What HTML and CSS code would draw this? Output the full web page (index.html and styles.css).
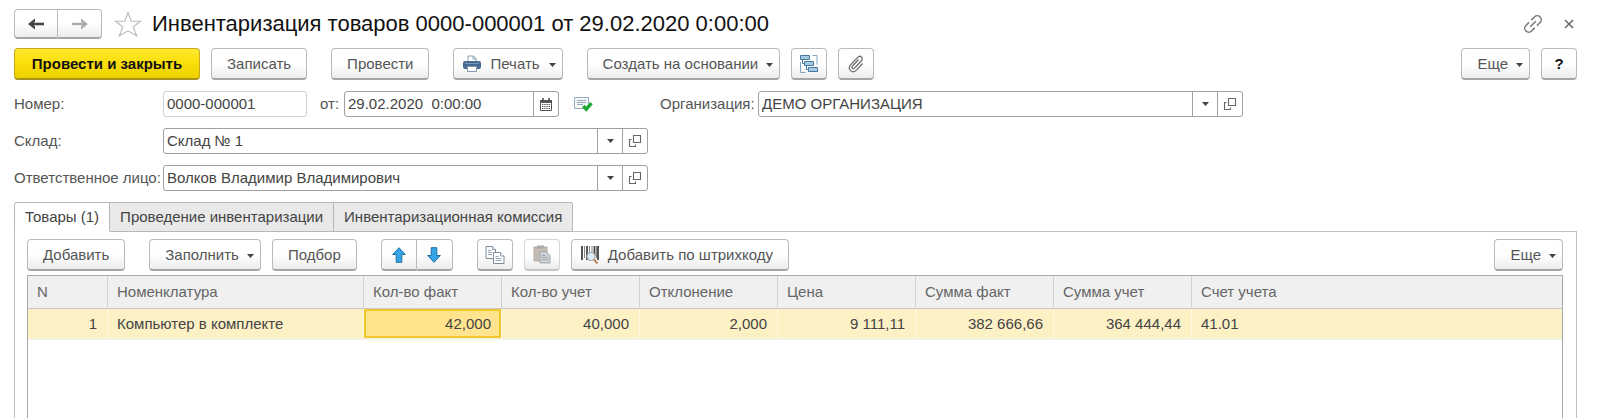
FILE: index.html
```html
<!DOCTYPE html>
<html lang="ru">
<head>
<meta charset="utf-8">
<title>Инвентаризация товаров</title>
<link rel="stylesheet" href="styles.css">
</head>
<body>
<svg class="sprite" width="0" height="0" aria-hidden="true">
  <symbol id="open" viewBox="0 0 14 14"><path d="M5.5 1.5h7v7h-7zM3.5 5.5h-2v7h6v-2" fill="none" stroke="#666" stroke-width="1.1"/></symbol>
  <symbol id="caret" viewBox="0 0 7 4"><path d="M0 0h7L3.5 4z" fill="#444"/></symbol>
</svg>
<main class="page">
  <header class="title-bar">
    <div class="btn-group nav">
      <button class="btn" aria-label="Назад"><svg width="18" height="14" viewBox="0 0 18 14"><path d="M4 7H17" stroke="#444" stroke-width="2.600"/><path d="M8 1.500V4.500L5.500 7L8 9.500V12.500L1 7Z" fill="#444"/></svg></button>
      <button class="btn" aria-label="Вперед"><svg width="18" height="14" viewBox="0 0 18 14"><path d="M14 7H1" stroke="#aaa" stroke-width="2.400"/><path d="M10 1.500V4.500L12.500 7L10 9.500V12.500L17 7Z" fill="#aaa"/></svg></button>
    </div>
    <button class="plain" aria-label="В избранное"><svg width="28" height="27" viewBox="0 0 28 27"><path d="M14 1.500L17.200 10.300H26.500L19.200 16L22.800 25L14 19.800L5.200 25L8.800 16L1.500 10.300H10.800Z" fill="#fff" stroke="#b5bac0" stroke-width="1.100"/></svg></button>
    <h1 class="title">Инвентаризация товаров 0000-000001 от 29.02.2020 0:00:00</h1>
    <div class="window-tools">
      <button class="plain" aria-label="Ссылка"><svg width="20" height="20" viewBox="0 0 20 20"><g transform="rotate(-45 10 10)" fill="none" stroke="#777" stroke-width="1.500"><path d="M8.500 6H4a4 4 0 0 0 0 8h4.500M11.500 6H16a4 4 0 0 1 0 8h-4.500M6 10h8"/></g></svg></button>
      <button class="plain" aria-label="Закрыть"><svg width="10" height="10" viewBox="0 0 10 10"><path d="M1 1l8 8M9 1L1 9" stroke="#666" stroke-width="1.500"/></svg></button>
    </div>
  </header>

  <div class="toolbar">
    <button class="btn primary">Провести и закрыть</button>
    <button class="btn">Записать</button>
    <button class="btn spaced">Провести</button>
    <button class="btn with-icon spaced">
      <svg width="18" height="18" viewBox="0 0 18 18"><path d="M5 7V1h5.500L13 3.500V7" fill="#fff" stroke="#8aa0b5"/><path d="M10 1v3h3" fill="none" stroke="#8aa0b5"/><rect y="6" width="18" height="8" rx="2" fill="#476c93"/><path d="M2 8.500h14" stroke="#7895b3"/><path d="M4.500 11.500h9v5h-9z" fill="#fff" stroke="#8298ae"/></svg>
      Печать<svg class="caret" width="7" height="4"><use href="#caret"/></svg></button>
    <button class="btn with-caret spaced">Создать на основании<svg class="caret" width="7" height="4"><use href="#caret"/></svg></button>
    <button class="btn square" aria-label="Структура подчиненности"><svg width="18" height="18" viewBox="0 0 18 18"><path d="M2.500 4.500V8.500H5M6.500 10.500V14.500H9" fill="none" stroke="#47799f"/><path d="M12.500 .500h4.500v9M.500 7v10.500h5" fill="none" stroke="#7fa5c2"/><path d="M.500 .500h9v4h-9zM4.500 6.500h9v4h-9zM8.500 12.500h9v4h-9z" fill="#a3c8e2" stroke="#47799f"/></svg></button>
    <button class="btn square" aria-label="Файлы"><svg width="16" height="18" viewBox="0 0 16 18"><path d="M10.500 4.500L4.700 10.700C2.900 12.700 5 14.600 6.800 12.800L13.200 6C16.100 2.700 12.300 -.5 9.400 2.600L3 9.400C-1.300 14.200 4.300 19.300 8.700 14.900L14.500 8.500" fill="none" stroke="#707070" stroke-width="1.300"/></svg></button>
    <button class="btn with-caret end">Еще<svg class="caret" width="7" height="4"><use href="#caret"/></svg></button>
    <button class="btn square help">?</button>
  </div>

  <form class="fields">
    <div class="row">
      <label class="label" for="number">Номер:</label>
      <div class="field readonly number"><input id="number" value="0000-000001" readonly></div>
      <label class="label-date" for="date">от:</label>
      <div class="field date"><input id="date" value="29.02.2020  0:00:00"><button type="button" aria-label="Календарь"><svg width="12" height="13" viewBox="0 0 12 13"><path d="M.500 2.500h11v10h-11z" fill="#fff" stroke="#555"/><path d="M0 2h12v3H0z" fill="#555"/><path d="M3 0v3M9 0v3" stroke="#444" stroke-width="1.500"/><path d="M2 6.500h8M2 8.500h8M2 10.500h8" stroke="#555" stroke-width="1.200" stroke-dasharray="1.400 .8"/></svg></button></div>
      <svg class="status" width="19" height="16" viewBox="0 0 19 16"><path d="M.500 1.500h14v11h-14z" fill="#f5f8fb" stroke="#9baabd"/><path d="M3 4.500h9M3 6.500h9M3 8.500h6" stroke="#9baabd"/><path d="M9.300 10l3 3.200 5.200-6" fill="none" stroke="#1fa932" stroke-width="3.400"/></svg>
      <label class="label-org" for="org">Организация:</label>
      <div class="field wide"><input id="org" value="ДЕМО ОРГАНИЗАЦИЯ"><button type="button" aria-label="Выбрать"><svg width="7" height="4"><use href="#caret"/></svg></button><button type="button" aria-label="Открыть"><svg width="14" height="14"><use href="#open"/></svg></button></div>
    </div>
    <div class="row">
      <label class="label" for="store">Склад:</label>
      <div class="field wide"><input id="store" value="Склад № 1"><button type="button" aria-label="Выбрать"><svg width="7" height="4"><use href="#caret"/></svg></button><button type="button" aria-label="Открыть"><svg width="14" height="14"><use href="#open"/></svg></button></div>
    </div>
    <div class="row">
      <label class="label" for="person">Ответственное лицо:</label>
      <div class="field wide"><input id="person" value="Волков Владимир Владимирович"><button type="button" aria-label="Выбрать"><svg width="7" height="4"><use href="#caret"/></svg></button><button type="button" aria-label="Открыть"><svg width="14" height="14"><use href="#open"/></svg></button></div>
    </div>
  </form>

  <div class="tabs" role="tablist">
    <button class="tab active" role="tab" aria-selected="true">Товары (1)</button>
    <button class="tab" role="tab">Проведение инвентаризации</button>
    <button class="tab" role="tab">Инвентаризационная комиссия</button>
  </div>
  <section class="panel">
    <div class="toolbar">
      <button class="btn">Добавить</button>
      <button class="btn with-caret spaced">Заполнить<svg class="caret" width="7" height="4"><use href="#caret"/></svg></button>
      <button class="btn">Подбор</button>
      <div class="btn-group spaced">
        <button class="btn square" aria-label="Вверх"><svg width="14" height="16" viewBox="0 0 14 16"><path d="M7 .700L13.300 7.500H9.800V15.300H4.200V7.500H.700Z" fill="#37a5e5" stroke="#1b6fa6"/></svg></button>
        <button class="btn square" aria-label="Вниз"><svg width="14" height="16" viewBox="0 0 14 16"><path d="M7 15.300L13.300 8.500H9.800V.700H4.200V8.500H.700Z" fill="#37a5e5" stroke="#1b6fa6"/></svg></button>
      </div>
      <button class="btn square spaced" aria-label="Копировать"><svg width="20" height="18" viewBox="0 0 20 18"><g fill="#fff" stroke="#7d8da0"><path d="M1 .500h6.500l3 3V12.500H1z"/><path d="M7.500 .500v3h3M3 4.500h3M3 6.500h4M3 8.500h4" stroke-width=".8"/><path d="M8.500 6.500h7l3.500 3.500v7.500H8.500z"/><path d="M15.500 6.500v3.500H19M10.500 10.500h3M10.500 12.500h6M10.500 14.500h6" stroke-width=".8"/></g></svg></button>
      <button class="btn square" aria-label="Вставить" disabled><svg width="18" height="19" viewBox="0 0 18 19"><path d="M1 2h13v14H1z" fill="#c5bdb5" stroke="#b1aaa4"/><path d="M4 .500h7v3H4z" fill="#aaa"/><path d="M7 6.500h6l4 4v7.500H7z" fill="#ccd0d4" stroke="#a5a9ad"/><path d="M9 10.500h3M9 12.500h6M9 14.500h6" stroke="#a5a9ad"/></svg></button>
      <button class="btn with-icon barcode"><svg width="18" height="18" viewBox="0 0 18 18"><path d="M1 0v14M6 0v14M13.500 0v10M17 0v14" stroke="#444" stroke-width="1.800"/><path d="M3.500 0v12M8.500 0v12M11 0v12M15.500 0v12" stroke="#777" stroke-width=".9"/><circle cx="10" cy="10.500" r="4" fill="#dcecf8" stroke="#a9a5a5" stroke-width="1.200"/><path d="M13 13.500l3.500 4" stroke="#bd8356" stroke-width="2"/></svg>Добавить по штрихкоду</button>
      <button class="btn with-caret end">Еще<svg class="caret" width="7" height="4"><use href="#caret"/></svg></button>
    </div>
    <div class="grid">
      <table>
        <colgroup><col class="c-n"><col class="c-name"><col class="c-num"><col class="c-num"><col class="c-num"><col class="c-num"><col class="c-num"><col class="c-num"><col></colgroup>
        <thead><tr><th>N</th><th>Номенклатура</th><th>Кол-во факт</th><th>Кол-во учет</th><th>Отклонение</th><th>Цена</th><th>Сумма факт</th><th>Сумма учет</th><th>Счет учета</th></tr></thead>
        <tbody><tr><td class="num">1</td><td>Компьютер в комплекте</td><td class="num selected">42,000</td><td class="num">40,000</td><td class="num">2,000</td><td class="num">9 111,11</td><td class="num">382 666,66</td><td class="num">364 444,44</td><td>41.01</td></tr></tbody>
      </table>
    </div>
  </section>
</main>
</body>
</html>
```

FILE: styles.css
```css
* { box-sizing: border-box; }
body {
  margin: 0;
  background: #fff;
  color: #444;
  font: 15px/20px "Liberation Sans", Arial, sans-serif;
}
button, input { font: inherit; color: inherit; }
svg { flex: none; display: block; }
.sprite { position: absolute; }

.page {
  display: flex;
  flex-direction: column;
  min-height: 100vh;
  padding: 9px 23px 0 14px;
}

.title-bar { display: flex; align-items: center; height: 30px; }
.title {
  flex: 1;
  margin: 0 0 0 10px;
  color: #111;
  font-size: 22px;
  line-height: 28px;
  font-weight: 400;
  white-space: nowrap;
}
.plain { display: flex; padding: 0; border: 0; background: none; }
.nav { margin-right: 12px; }
.window-tools { display: flex; align-items: center; gap: 21px; margin-right: 3px; }

.btn {
  display: flex;
  align-items: center;
  justify-content: center;
  height: 32px;
  padding: 0 15px;
  border: 1px solid #bbb;
  border-bottom: 2px solid #a5a5a5;
  border-radius: 4px;
  background: linear-gradient(#fff 50%, #ececec);
  color: #555;
  white-space: nowrap;
}
.btn.primary {
  min-width: 186px;
  border-color: #c4aa1c;
  border-bottom-color: #a8921c;
  background: linear-gradient(#ffe92e, #fade0a 50%, #edd000);
  color: #111;
  font-weight: 700;
}
.btn.square { width: 36px; padding: 0; }
.btn.with-caret { padding-right: 6px; }
.btn.with-icon { gap: 9px; padding: 0 6px 0 9px; }
.btn.barcode { padding-right: 15px; }
.btn.help { color: #111; font-weight: 700; }
.btn:disabled { border-color: #d5d5d5; border-bottom-color: #c5c5c5; }
.caret { margin: 3px 0 0 8px; }
.with-icon .caret { margin-left: 0; }

.btn-group { display: flex; }
.btn-group .btn:first-child { border-radius: 4px 0 0 4px; }
.btn-group .btn:last-child { border-left: 0; border-radius: 0 4px 4px 0; }
.nav .btn { width: 44px; height: 30px; padding: 0; }

.toolbar { display: flex; gap: 11px; }
.page > .toolbar { margin-top: 9px; }
.toolbar .spaced { margin-left: 13px; }
.toolbar .end { margin-left: auto; }

.fields { display: flex; flex-direction: column; gap: 11px; margin-top: 11px; }
.row { display: flex; align-items: center; }
.label { width: 149px; color: #555; white-space: nowrap; }
.label-date { width: 24px; margin-left: 13px; color: #555; }
.label-org { width: 98px; margin-left: 67px; color: #555; white-space: nowrap; }
.status { margin-left: 15px; }
.field {
  display: flex;
  height: 26px;
  border: 1px solid #a0a0a0;
  border-radius: 3px;
  background: #fff;
}
.field.readonly { border-color: #d0d0d0; }
.field.number { width: 144px; }
.field.date { width: 215px; }
.field.wide { width: 485px; }
.field input {
  flex: 1;
  min-width: 0;
  padding: 0 3px;
  border: 0;
  background: none;
  outline: 0;
}
.field button {
  display: flex;
  align-items: center;
  justify-content: center;
  width: 25px;
  padding: 0;
  border: 0;
  border-left: 1px solid #a0a0a0;
  background: none;
}

.tabs { display: flex; position: relative; z-index: 1; margin-top: 11px; }
.tab {
  height: 30px;
  padding: 0 10px;
  border: 1px solid #b8b8b8;
  border-left: 0;
  background: #e9e9e9;
  white-space: nowrap;
}
.tab.active {
  border-left: 1px solid #b8b8b8;
  border-bottom-color: #fff;
  border-radius: 3px 0 0 0;
  background: #fff;
}
.tab:last-child { border-radius: 0 3px 0 0; }
.panel {
  flex: 1;
  display: flex;
  flex-direction: column;
  margin-top: -1px;
  padding: 7px 13px 0 12px;
  border: 1px solid #c0c0c0;
  border-bottom: 0;
}
.grid {
  flex: 1;
  margin-top: 4px;
  border: 1px solid #aaa;
  border-bottom: 0;
}
table { width: 100%; table-layout: fixed; border-collapse: separate; border-spacing: 0; }
.c-n { width: 80px; }
.c-name { width: 256px; }
.c-num { width: 138px; }
th, td { height: 33px; padding: 0 10px 0 9px; text-align: left; font-weight: 400; white-space: nowrap; }
th { border-right: 1px solid #d2d2d2; border-bottom: 1px solid #c8c8c8; background: #f0f0f0; color: #666; }
td { height: 31px; border-right: 1px solid #fff8e2; border-bottom: 2px solid #f3f1e6; background: #fcf0c5; }
th:last-child, td:last-child { border-right: 0; }
td.num { text-align: right; }
td.selected { background: #ffe48d; box-shadow: inset 0 0 0 2px #f3c72c; }
```
